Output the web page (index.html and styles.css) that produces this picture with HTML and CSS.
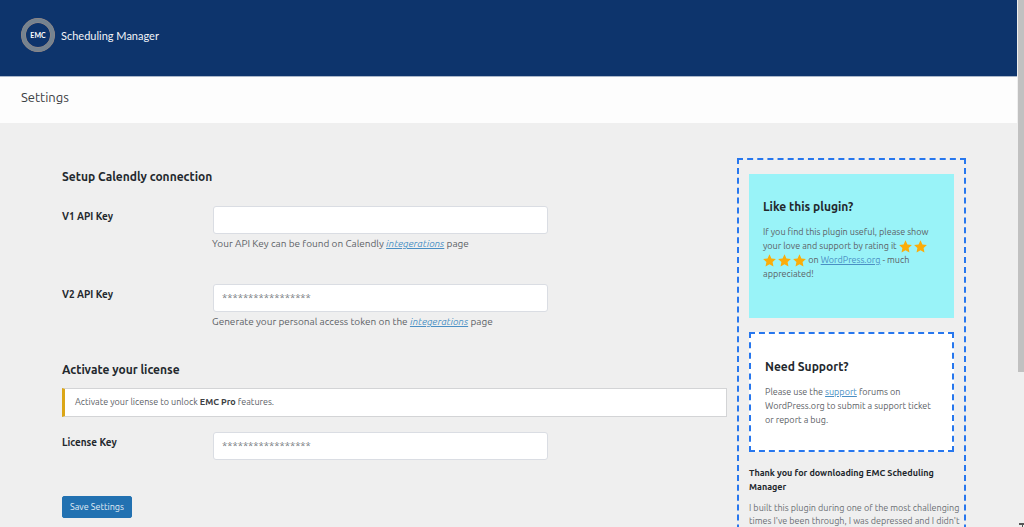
FILE: index.html
```html
<!DOCTYPE html>
<html lang="en">
<head>
<meta charset="utf-8">
<title>Scheduling Manager Settings</title>
<link rel="stylesheet" href="styles.css">
</head>
<body>
<svg class="sprite" aria-hidden="true">
  <symbol id="star" viewBox="0.5 0.5 23 23"><path d="M12 1l3.4 7.300 7.900 1-5.800 5.500 1.500 7.900-7-3.900-7 3.900 1.500-7.900L.7 9.300l7.900-1z"/></symbol>
</svg>
<div class="window">
  <div class="page">
    <header class="brand">
      <svg class="logo" viewBox="0 0 34 34" role="img" aria-label="EMC">
        <circle cx="17" cy="17" r="14.500" fill="none" stroke="#a08b83" stroke-width="5"/>
        <circle cx="17" cy="17" r="14.500" fill="none" stroke="#758390" stroke-width="4"/>
        <text class="logo-text" x="17" y="20" text-anchor="middle">EMC</text>
      </svg>
      <span class="brand-name">Scheduling Manager</span>
    </header>
    <div class="title-bar"><h1 class="title">Settings</h1></div>
    <div class="content">
      <form class="settings">
        <h2 class="heading">Setup Calendly connection</h2>
        <div class="row">
          <label class="label" for="v1">V1 API Key</label>
          <div class="field">
            <input class="input" id="v1" type="text">
            <p class="hint">Your API Key can be found on Calendly <a class="link" href="#"><em>integerations</em></a> page</p>
          </div>
        </div>
        <div class="row">
          <label class="label" for="v2">V2 API Key</label>
          <div class="field">
            <input class="input" id="v2" type="text" placeholder="*****************">
            <p class="hint">Generate your personal access token on the <a class="link" href="#"><em>integerations</em></a> page</p>
          </div>
        </div>
        <h2 class="heading heading-license">Activate your license</h2>
        <p class="notice">Activate your license to unlock <strong>EMC Pro</strong> features.</p>
        <div class="row row-license">
          <label class="label" for="license">License Key</label>
          <div class="field">
            <input class="input" id="license" type="text" placeholder="*****************">
          </div>
        </div>
        <button class="save" type="button">Save Settings</button>
      </form>
      <aside class="sidebar">
        <section class="card card-like">
          <h2 class="heading">Like this plugin?</h2>
          <p class="copy">If you find this plugin useful, please show your love and support by rating it <svg class="star"><use href="#star"/></svg> <svg class="star"><use href="#star"/></svg> <svg class="star"><use href="#star"/></svg> <svg class="star"><use href="#star"/></svg> <svg class="star"><use href="#star"/></svg> on <a class="link" href="#">WordPress.org</a> - much appreciated!</p>
        </section>
        <section class="card card-support">
          <h2 class="heading">Need Support?</h2>
          <p class="copy">Please use the <a class="link" href="#">support</a> forums on WordPress.org to submit a support ticket or report a bug.</p>
        </section>
        <h3 class="thanks">Thank you for downloading EMC Scheduling Manager</h3>
        <p class="story">I built this plugin during one of the most challenging times I've been through, I was depressed and I didn't</p>
      </aside>
    </div>
  </div>
  <div class="scrollbar" aria-hidden="true">
    <div class="thumb"></div>
    <svg class="arrow" viewBox="0 0 5 4"><path d="M0 0h5v2H4v2H3V2H0z" fill="#555"/></svg>
  </div>
</div>
</body>
</html>
```
FILE: styles.css
```css
* { box-sizing: border-box; }
body {
  margin: 0;
  background: #efefef;
  color: #5c6166;
  font: 10px/14px Ubuntu, "Noto Sans", sans-serif;
}
h1, h2, h3, p { margin: 0; }
.sprite { display: none; }
.window { display: flex; height: 100vh; overflow: hidden; }
.page { flex: 1; min-width: 0; }
.brand {
  display: flex;
  align-items: center;
  gap: 6px;
  padding: 18px 21px 24px;
  background: #0d346c;
  border-bottom: 1px solid #aab7ca;
}
.logo { width: 34px; height: 34px; }
.logo-text { font: 700 7px Lato, sans-serif; fill: #fff; }
.brand-name { padding-top: 2px; color: #f2f4f8; font: 11px/16px Lato, sans-serif; }
.title-bar { padding: 10px 21px 16px; background: #fdfdfd; }
.title { color: #3c4043; font-size: 13px; line-height: 20px; font-weight: 400; }
.content {
  display: grid;
  grid-template-columns: minmax(0, 1fr) 229px;
  align-items: start;
  gap: 10px;
  padding: 35px 51px 0 62px;
}
.settings { padding-top: 9px; }
.heading { color: #23282d; font-size: 12px; line-height: 20px; font-weight: 600; }
.row { display: grid; grid-template-columns: 150px minmax(0, 1fr); margin-top: 19px; }
.row + .row { margin-top: 33px; }
.label { padding-top: 4px; color: #23282d; font-weight: 600; }
.field { display: grid; gap: 3px; }
.input {
  width: 65%;
  height: 28px;
  margin: 0 1px;
  padding: 0 8px;
  border: 1px solid #dadde3;
  border-radius: 3px;
  background: #fff;
  color: #5c6166;
  font: inherit;
  font-size: 11px;
}
.input::placeholder { color: #75797e; }
.link { color: #4a8fc4; }
.heading-license { margin-top: 31px; }
.notice {
  margin-top: 8px;
  padding: 6px 10px 7px;
  border: 1px solid #d3d4d6;
  border-left: 3px solid #dba617;
  background: #fff;
  font-size: 9px;
}
.notice strong { color: #3c4043; font-weight: 600; }
.row-license { margin-top: 15px; }
.save {
  margin-top: 36px;
  padding: 3px 7px;
  border: 1px solid #2271b1;
  border-radius: 2px;
  background: #2271b1;
  color: #e0ecf5;
  font: inherit;
  font-size: 9px;
}
.sidebar { padding: 14px 10px 40px; border: 2px dashed #2777ee; }
.card .heading { margin-bottom: 8px; }
.card-like { padding: 23px 14px 37px; background: #99f3f8; }
.card-support {
  margin-top: 14px;
  padding: 23px 14px;
  border: 2px dashed #2777ee;
  background: #fff;
}
.copy { font-size: 9px; }
.star { width: 13px; height: 13px; vertical-align: -4px; fill: #fbad09; }
.thanks { margin-top: 14px; color: #23282d; font-size: 9px; font-weight: 600; }
.story { margin: 8px -8px 0 0; color: #6c7075; font-size: 9px; line-height: 13px; }
.scrollbar {
  display: flex;
  flex-direction: column;
  justify-content: space-between;
  align-items: flex-end;
  width: 7px;
  background: #efefef;
}
.thumb { width: 6px; height: 70.5%; background: #c1c1c1; }
.arrow { width: 5px; height: 4px; }
```
